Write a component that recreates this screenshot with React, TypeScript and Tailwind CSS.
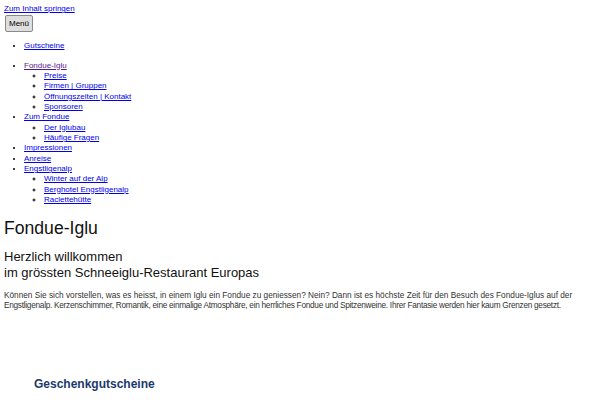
import React from "react";

const A = ({ children, visited }: { children: React.ReactNode; visited?: boolean }) => (
  <a href="#" className={visited ? "text-[#551a8b] underline" : "text-[#0000ee] underline"}>
    {children}
  </a>
);

export default function App() {
  return (
    <div className="p-[4px] bg-white text-black text-[8px] leading-[10.35px] h-[400px] overflow-hidden" style={{ fontFamily: '"Liberation Sans", Arial, sans-serif' }}>
      <div>
        <A>Zum Inhalt springen</A>
      </div>
      <button className="mt-[1px] ml-[1px] h-[17px] px-[3px] bg-[#dedede] border border-[#8a8a8a] rounded-[2px] text-[8px] leading-none text-black">
        Menü
      </button>
      <ul className="list-disc pl-[20px] my-[9px]">
        <li>
          <A>Gutscheine</A>
        </li>
      </ul>
      <ul className="list-disc pl-[20px] mt-[9px]">
        <li>
          <A visited>Fondue-Iglu</A>
          <ul className="list-[circle] pl-[20px]">
            <li><A>Preise</A></li>
            <li><A>Firmen | Gruppen</A></li>
            <li><A>Öffnungszeiten | Kontakt</A></li>
            <li><A>Sponsoren</A></li>
          </ul>
        </li>
        <li>
          <A>Zum Fondue</A>
          <ul className="list-[circle] pl-[20px]">
            <li><A>Der Iglubau</A></li>
            <li><A>Häufige Fragen</A></li>
          </ul>
        </li>
        <li><A>Impressionen</A></li>
        <li><A>Anreise</A></li>
        <li>
          <A>Engstligenalp</A>
          <ul className="list-[circle] pl-[20px]">
            <li><A>Winter auf der Alp</A></li>
            <li><A>Berghotel Engstligenalp</A></li>
            <li><A>Raclettehütte</A></li>
          </ul>
        </li>
      </ul>
      <h1 className="mt-[12px] text-[17.6px] leading-[21px] text-[#111]">Fondue-Iglu</h1>
      <h2 className="mt-[10px] text-[13px] leading-[16px] text-[#111]">
        Herzlich willkommen
        <br />
        im grössten Schneeiglu-Restaurant Europas
      </h2>
      <p className="mt-[10px] text-[8.25px] text-[#333] whitespace-nowrap">
        Können Sie sich vorstellen, was es heisst, in einem Iglu ein Fondue zu geniessen? Nein? Dann ist es höchste Zeit für den Besuch des Fondue-Iglus auf der
        <br />
        <span className="tracking-[-0.27px]">
          Engstligenalp. Kerzenschimmer, Romantik, eine einmalige Atmosphäre, ein herrliches Fondue und Spitzenweine. Ihrer Fantasie werden hier kaum Grenzen gesetzt.
        </span>
      </p>
      <div className="pl-[30px] pt-[66px]">
        <h3 className="text-[12px] leading-[15px] font-bold text-[#1b3a6b]">Geschenkgutscheine</h3>
      </div>
    </div>
  );
}
